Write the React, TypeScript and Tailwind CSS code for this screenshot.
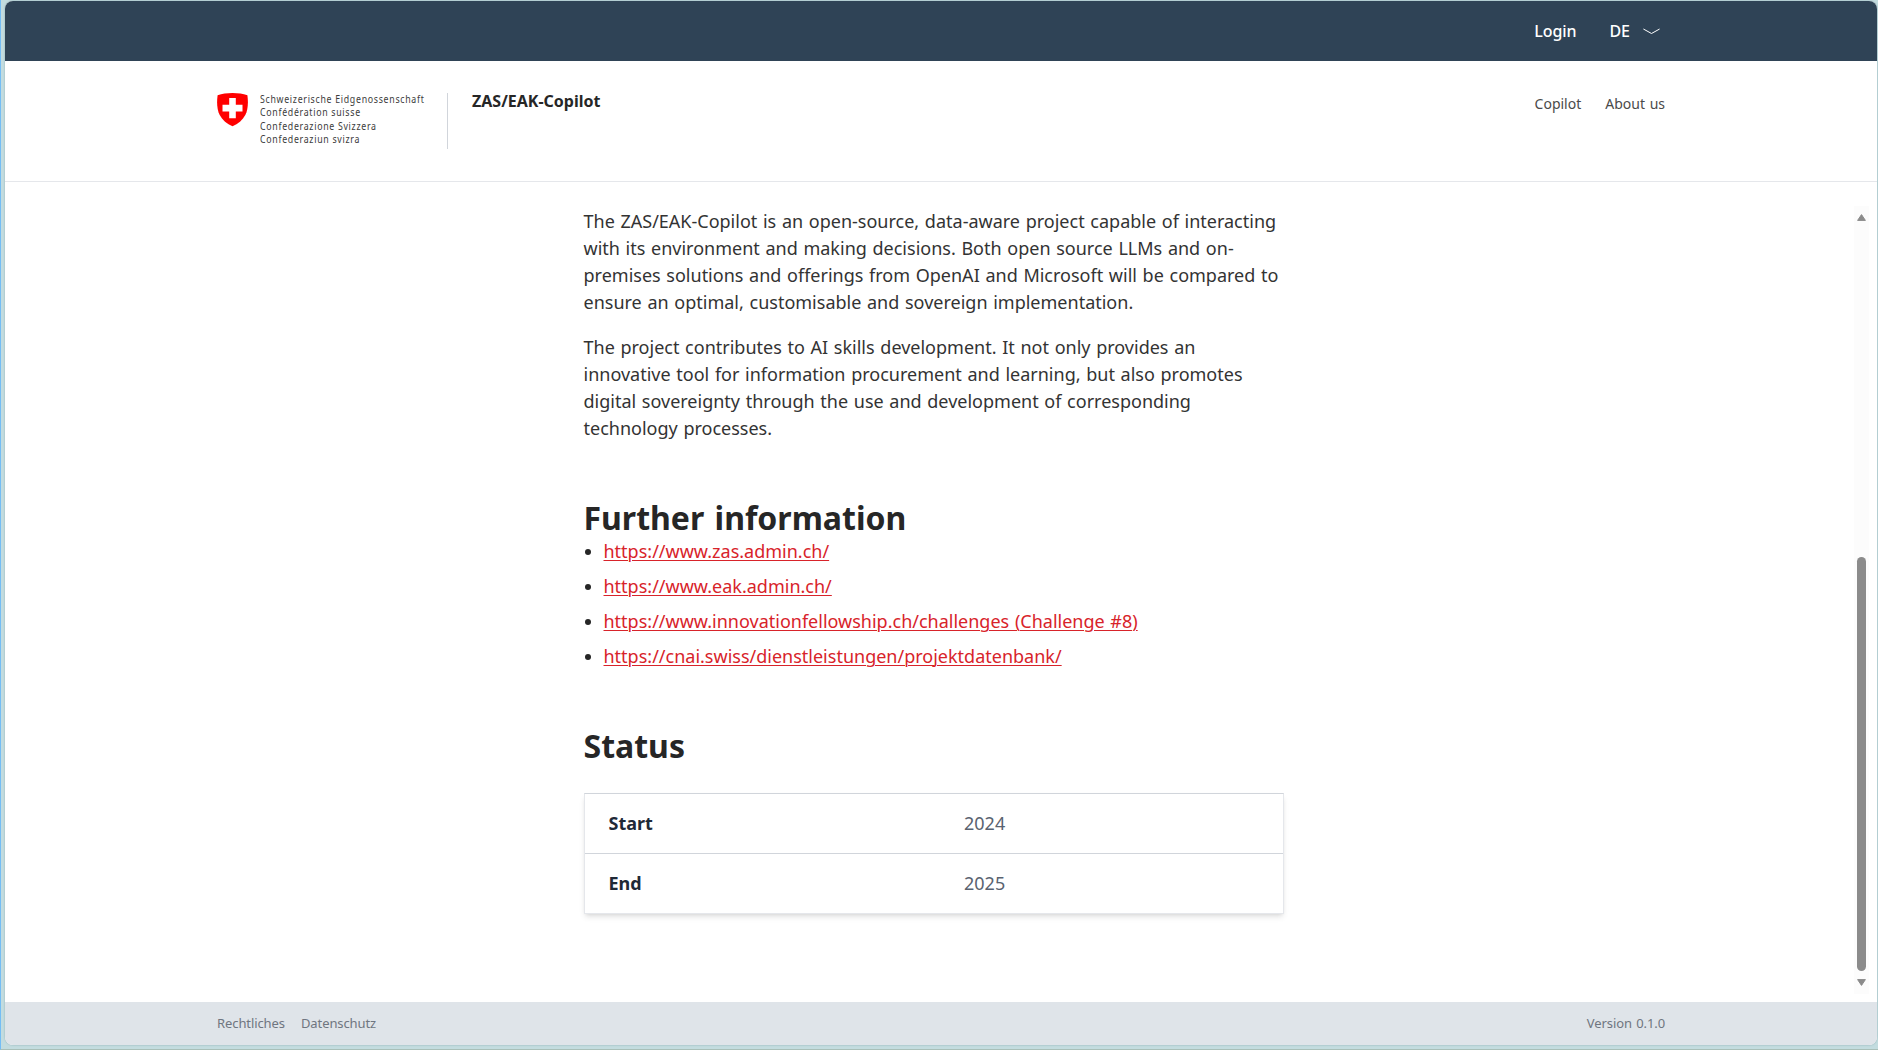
const links = [
  "https://www.zas.admin.ch/",
  "https://www.eak.admin.ch/",
  "https://www.innovationfellowship.ch/challenges (Challenge #8)",
  "https://cnai.swiss/dienstleistungen/projektdatenbank/",
];

const rows = [
  { label: "Start", value: "2024" },
  { label: "End", value: "2025" },
];

function Shield() {
  return (
    <svg className="mt-[13px] h-[34px] w-[31px] shrink-0" viewBox="0 0 31 34">
      <path
        d="M0.6 2.2C5 0.8 10 0.1 15.5 0.1S26 0.8 30.4 2.2C31.4 9.5 31 16.5 28.3 22C25.7 27.2 21 30.8 15.5 33.3C10 30.8 5.3 27.2 2.7 22C0 16.5-.4 9.5.6 2.2Z"
        fill="#ff0000"
      />
      <path d="M12.2 5h6.6v6.8h6.7v6.6h-6.7v6.8h-6.6v-6.8H5.5v-6.6h6.7Z" fill="#fff" />
    </svg>
  );
}

function TopBar() {
  return (
    <div className="flex h-[60px] shrink-0 items-center justify-end bg-[#2f4356] pr-[217px] text-[16px] font-medium text-white">
      <span className="tracking-[-0.1px]">Login</span>
      <span className="ml-[33px]">DE</span>
      <svg className="ml-[13px] h-[7px] w-[17px]" viewBox="0 0 17 7" fill="none" stroke="#fff" strokeWidth="1">
        <path d="M0.4 1L8.5 5.5L16.6 1" />
      </svg>
    </div>
  );
}

function Header() {
  return (
    <header className="flex h-[121px] shrink-0 border-b border-[#e5e7eb] pt-[19px] pr-[212px] pl-[212px]">
      <Shield />
      <div className="mt-[13px] ml-[11px] w-[177px]">
        <div className="ml-[0.5px] w-[220px] origin-left scale-x-[0.88] text-[10px] leading-[13.33px] font-normal tracking-[0.79px] whitespace-nowrap text-[#3c3c3c]">
          <div>Schweizerische Eidgenossenschaft</div>
          <div>Confédération suisse</div>
          <div>Confederazione Svizzera</div>
          <div>Confederaziun svizra</div>
        </div>
      </div>
      <div className="mt-[13px] ml-[11px] h-[56px] w-px bg-[#d1d5db]" />
      <div className="mt-[9px] ml-[24px] text-[16px] leading-6 font-bold text-[#262626]">ZAS/EAK-Copilot</div>
      <nav className="mt-[14px] ml-auto flex gap-6 text-[14px] leading-5 text-[#4a4a4a] [word-spacing:1px]">
        <span>Copilot</span>
        <span>About us</span>
      </nav>
    </header>
  );
}

function Scrollbar() {
  return (
    <div className="mt-[24px] mr-[8px] mb-[8px] ml-auto flex w-[15px] flex-col items-center bg-[#fcfcfc]">
      <svg className="mt-[8px] h-[7px] w-[9px]" viewBox="0 0 9 7">
        <path d="M4.5 0.6L8.4 6.4H0.6Z" fill="#8b8b8b" stroke="#8b8b8b" strokeWidth="1" strokeLinejoin="round" />
      </svg>
      <div className="mt-auto h-[414px] w-[9px] rounded-full bg-[#8b8b8b]" />
      <svg className="mt-[8px] mb-[8px] h-[7px] w-[9px]" viewBox="0 0 9 7">
        <path d="M4.5 6.4L8.4 0.6H0.6Z" fill="#8b8b8b" stroke="#8b8b8b" strokeWidth="1" strokeLinejoin="round" />
      </svg>
    </div>
  );
}

function Content() {
  return (
    <main className="ml-[579px] w-[700px] pt-[26px] text-[18px] leading-[27px] whitespace-nowrap text-[#262626] [word-spacing:1px]">
      <div className="-ml-[0.5px] text-[#333]">
        <p>
          The ZAS/EAK-Copilot is an open-source, data-aware project capable of interacting
          <br />
          with its environment and making decisions. Both open source LLMs and on-
          <br />
          premises solutions and offerings from OpenAI and Microsoft will be compared to
          <br />
          ensure an optimal, customisable and sovereign implementation.
        </p>
        <p className="mt-[18px]">
          The project contributes to AI skills development. It not only provides an
          <br />
          innovative tool for information procurement and learning, but also promotes
          <br />
          digital sovereignty through the use and development of corresponding
          <br />
          technology processes.
        </p>
      </div>
      <h2 className="mt-[56px] -ml-[0.5px] text-[32px] leading-[40px] font-bold [word-spacing:2px]">Further information</h2>
      <ul className="flex flex-col gap-2">
        {links.map((link) => (
          <li key={link} className="flex items-center">
            <span className="ml-px h-[6px] w-[6px] rounded-full bg-[#262626]" />
            <a className="ml-[12.5px] text-[#d8232a] underline decoration-1 underline-offset-2">{link}</a>
          </li>
        ))}
      </ul>
      <h2 className="mt-[56px] -ml-[0.5px] text-[32px] leading-[40px] font-bold">Status</h2>
      <div className="mt-[27px] w-[700px] border border-[#e5e7eb] border-t-[#d1d5db] shadow-md">
        {rows.map((row, i) => (
          <div key={row.label} className={i ? "flex h-[60px] items-center border-t border-[#d1d5db]" : "flex h-[59px] items-center"}>
            <div className="w-[379px] pl-[23.5px] font-bold text-[#1f2937]">{row.label}</div>
            <div className="text-[#596270]">{row.value}</div>
          </div>
        ))}
      </div>
    </main>
  );
}

function Footer() {
  return (
    <footer className="flex h-[43px] shrink-0 items-center bg-[#dfe4e9] pr-[212px] pl-[212px] text-[13px] tracking-[-0.09px] text-[#6f7680] [word-spacing:1px]">
      <span>Rechtliches</span>
      <span className="ml-4">Datenschutz</span>
      <span className="ml-auto">Version 0.1.0</span>
    </footer>
  );
}

export default function App() {
  return (
    <div className="h-[1050px] w-[1878px] overflow-hidden border-b border-l border-b-[#a9bfb8] border-l-[#74bdf5] bg-[#c3dcdf] pt-px pr-px pl-1 font-['Noto_Sans',sans-serif]">
      <div className="flex h-[1044px] flex-col overflow-hidden rounded-lg bg-white shadow-[0_0_2px_#8ba7b0]">
        <TopBar />
        <Header />
        <div className="flex min-h-0 flex-1">
          <Content />
          <Scrollbar />
        </div>
        <Footer />
      </div>
    </div>
  );
}
